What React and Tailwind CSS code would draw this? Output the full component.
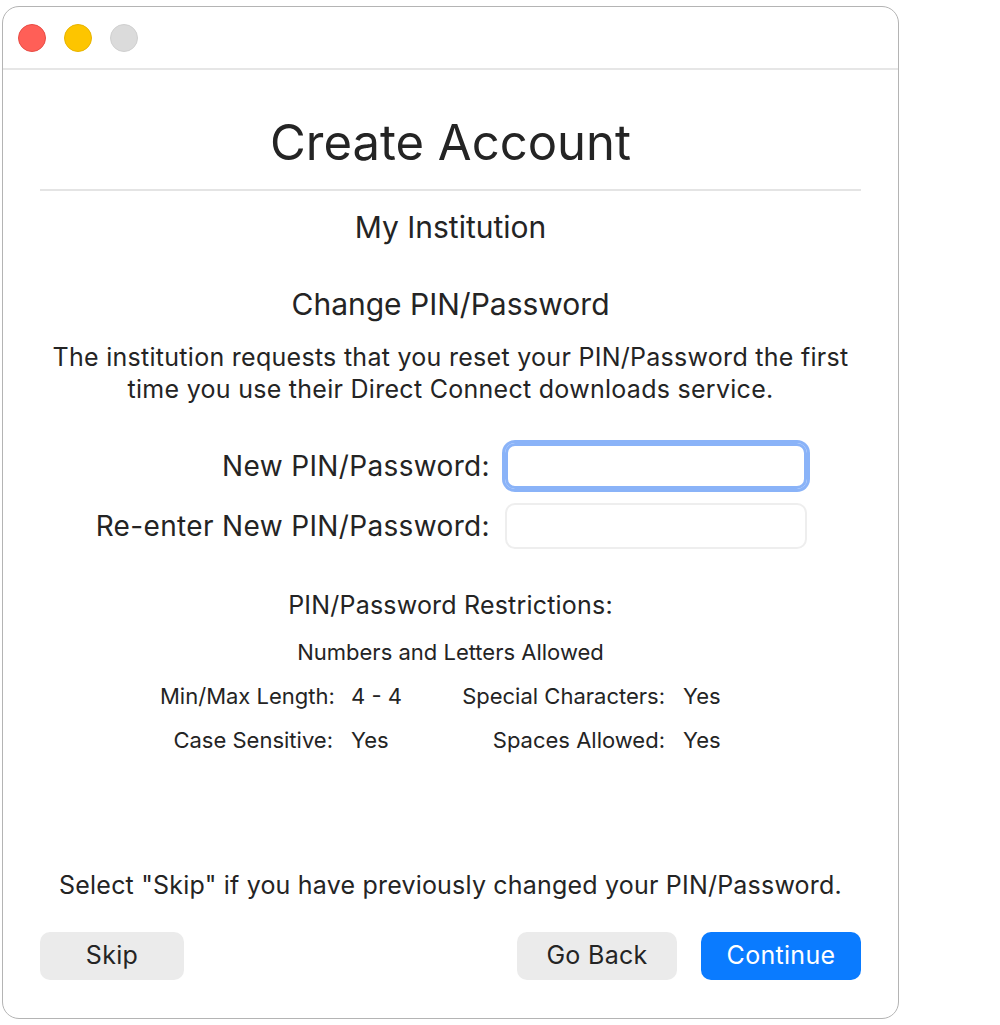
const restrictions = [
  ['Min/Max Length:', '4 - 4', 'Special Characters:', 'Yes'],
  ['Case Sensitive:', 'Yes', 'Spaces Allowed:', 'Yes'],
]

const App = () => {
  return (
    <div className="min-h-[1025px] bg-white pl-[2px] pt-[6px] font-['Inter','Liberation_Sans',sans-serif] text-[#242424]">
      <div className="w-[897px] rounded-[17px] border border-[#b4b4b4] bg-white">
        {/* title bar */}
        <div className="flex h-[61px] items-center gap-[18px] pl-[15px]">
          <span className="h-[28px] w-[28px] rounded-full border border-[#e84c45] bg-[#ff5f57]" />
          <span className="h-[28px] w-[28px] rounded-full border border-[#e8b400] bg-[#fdc500]" />
          <span className="h-[28px] w-[28px] rounded-full border border-[#d0d0d0] bg-[#dbdbdb]" />
        </div>
        <div className="h-[2px] bg-[#e6e6e6]" />

        <div className="px-[37px] pb-[38px]">
          <h1 className="mt-[43px] text-center text-[49px] leading-[60px]">Create Account</h1>
          <div className="mt-[16px] h-[2px] bg-[#e4e4e4]" />
          <p className="mt-[18px] text-center text-[30px] leading-[36px]">My Institution</p>
          <p className="mt-[41px] text-center text-[30px] leading-[36px]">Change PIN/Password</p>
          <p className="mt-[19px] text-center text-[25px] leading-[32px] tracking-[0.28px]">
            The institution requests that you reset your PIN/Password the first
            <br />
            time you use their Direct Connect downloads service.
          </p>

          <div className="mt-[38px] grid grid-cols-[450px_302px] items-center gap-x-[15px] gap-y-[14px]">
            <label className="text-right text-[28px] tracking-[0.35px]">New PIN/Password:</label>
            <div className="h-[46px] rounded-[10px] border-[3px] border-[#8ab3f8] shadow-[0_0_0_3px_#8ab3f8]" />
            <label className="text-right text-[28px] tracking-[0.35px]">Re-enter New PIN/Password:</label>
            <div className="h-[46px] rounded-[10px] border-2 border-[#eeeeee]" />
          </div>

          <p className="mt-[40px] text-center text-[25px] leading-[32px] tracking-[0.2px]">PIN/Password Restrictions:</p>
          <p className="mt-[17px] text-center text-[22px] leading-[28px]">Numbers and Letters Allowed</p>

          <div className="ml-[120px] mt-[8px] grid grid-cols-[173px_92px_204px_auto] gap-x-[18px] whitespace-nowrap text-[22px] leading-[44px]">
            {restrictions.map((row) => (
              <div key={row[0]} className="contents">
                <span className="text-right">{row[0]}</span>
                <span>{row[1]}</span>
                <span className="text-right">{row[2]}</span>
                <span>{row[3]}</span>
              </div>
            ))}
          </div>

          <p className="mt-[107px] text-center text-[25px] leading-[32px] tracking-[0.2px]">
            Select "Skip" if you have previously changed your PIN/Password.
          </p>

          <div className="mt-[31px] flex items-center text-[25px] tracking-[0.3px]">
            <button className="h-[48px] w-[144px] rounded-[10px] bg-[#ebebeb] text-[#242424]">Skip</button>
            <div className="flex-1" />
            <button className="h-[48px] w-[160px] rounded-[10px] bg-[#ebebeb] text-[#242424]">Go Back</button>
            <button className="ml-[24px] h-[48px] w-[160px] rounded-[10px] bg-[#0a7bff] text-white">Continue</button>
          </div>
        </div>
      </div>
    </div>
  )
}

export default App
